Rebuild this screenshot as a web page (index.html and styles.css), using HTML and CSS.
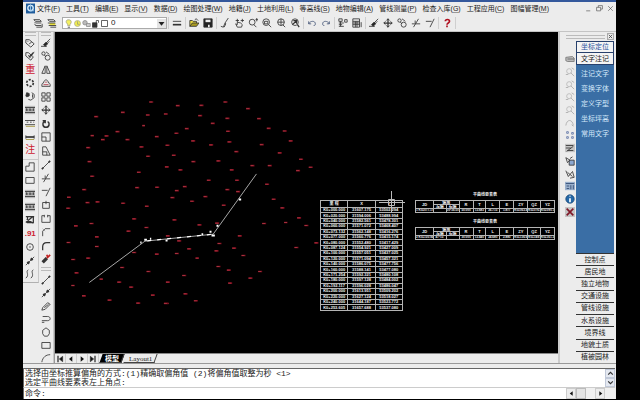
FILE: index.html
```html
<!DOCTYPE html>
<html lang="zh-CN">
<head>
<meta charset="utf-8">
<title>CAD</title>
<link rel="stylesheet" href="styles.css">
</head>
<body>
<svg class="sprite" aria-hidden="true">
  <symbol id="layers" viewBox="0 0 12 12"><path d="M1 2h7l2 2H3zM2 5l1 1h7M2 7l1 2h7M4 11h7V7"/></symbol>
  <symbol id="layers2" viewBox="0 0 12 12"><path d="M3 6h7v3H3z" fill="#e8e040" stroke="none"/><path d="M1 2h7l2 2H3zM1 6h9M2 9h9M4 11h7"/></symbol>
  <symbol id="lines" viewBox="0 0 12 12"><path d="M1 4h10" /><path d="M1 8h10" stroke-width="2"/></symbol>
  <symbol id="open" viewBox="0 0 12 12"><path d="M1 10V3h3l1 1h4v2" fill="#e8d840"/><path d="M1 10l3-4h8l-3 4z" fill="#a89a20"/><path d="M7 2c2-2 3 0 4 1"/></symbol>
  <symbol id="save" viewBox="0 0 12 12"><path d="M1 1h10v10H1z" fill="#222"/><path d="M3 2h6v3H3z" fill="#eee" stroke="none"/><path d="M6 8h2v3H6z" fill="#eee" stroke="none"/></symbol>
  <symbol id="brush" viewBox="0 0 12 12"><path d="M10 0L6 6l-2 5-3-1M6 6l1 1-2 4"/></symbol>
  <symbol id="pan" viewBox="0 0 12 12"><path d="M2 3h4M4 1v4M4 11L2 7l2 1V5l4 1 2 2-1 3zM8 3h4M10 1v4"/></symbol>
  <symbol id="zoomrt" viewBox="0 0 12 12"><circle cx="5" cy="5" r="3.5"/><path d="M7 8l3 3M9 2h3M10.500 0v4"/></symbol>
  <symbol id="zoomwin" viewBox="0 0 12 12"><circle cx="5" cy="5" r="4"/><path d="M3 4h4v3H3zM8 8l3 3"/></symbol>
  <symbol id="zoomall" viewBox="0 0 12 12"><circle cx="6" cy="5" r="4"/><path d="M6 1v8M2 5h8M8 8l3 3"/></symbol>
  <symbol id="zoomprev" viewBox="0 0 12 12"><circle cx="6" cy="5" r="4"/><path d="M3 8l5-5M4 3h4v4M9 8l2 3" stroke-width="1.500"/></symbol>
  <symbol id="undo" viewBox="0 0 12 12"><path d="M2 4v3h3M2 7c2-4 8-4 8 0 0 2-1 2-2 2" stroke="#445577"/></symbol>
  <symbol id="redo" viewBox="0 0 12 12"><path d="M10 4v3H7M10 7C8 3 2 3 2 7c0 2 1 2 2 2" stroke="#445577"/></symbol>
  <symbol id="props" viewBox="0 0 12 12"><path d="M1 1h4v3H1zM1 6h6M1 8h4M1 10h6M8 2h3v3H8zM3 4v6"/></symbol>
  <symbol id="grid" viewBox="0 0 12 12"><path d="M1 1h8v10H1zM1 4h8M1 6h8M1 8h8M4 4v7M6 4v7M11 5v6" /></symbol>
  <symbol id="erase" viewBox="0 0 12 12"><path d="M11 1L6 6M10 4L7 7"/><path d="M6 5l2 2-3 3-2-2z" fill="#222"/><path d="M0 10h7"/></symbol>
  <symbol id="move" viewBox="0 0 12 12"><path d="M6 1v10M1 6h10" stroke-width="1.500"/><path d="M4 3l2-2 2 2M4 9l2 2 2-2M3 4L1 6l2 2M9 4l2 2-2 2"/></symbol>
  <symbol id="copy" viewBox="0 0 12 12"><circle cx="3" cy="3" r="2"/><circle cx="8" cy="8" r="3"/><path d="M6 1l4 3M4 5l2 2"/></symbol>
  <symbol id="trim" viewBox="0 0 12 12"><path d="M1 7h10M9 1L3 11M5 3v3" /></symbol>
  <symbol id="extend" viewBox="0 0 12 12"><path d="M1 4h7M11 1L6 11"/></symbol>
  <symbol id="help" viewBox="0 0 12 12"><path d="M4 4c0-3 5-3 5 0 0 2-3 2-3 4M6 9v2" stroke="#b01020" stroke-width="2"/></symbol>
  <symbol id="tag" viewBox="0 0 12 12"><path d="M1 2h4l6 5-4 4-6-5zM3 4h1M5 7l3-2"/></symbol>
  <symbol id="tagcheck" viewBox="0 0 12 12"><path d="M1 2h3l6 5-3 4-6-5zM4 5l2 3 5-7" /><path d="M5 7l5-5" stroke-width="1.500"/></symbol>
  <symbol id="ring" viewBox="0 0 12 12"><circle cx="6" cy="6" r="4" stroke-width="2" stroke-dasharray="2.500 1.700"/></symbol>
  <symbol id="swirl" viewBox="0 0 12 12"><path d="M1 6l1-4 3 1v3L2 7z" fill="#333"/><path d="M4 10l3 1 4-3V4L8 2M9 4v4"/></symbol>
  <symbol id="rail" viewBox="0 0 12 12"><path d="M0 1h12v10H0z" fill="#b8b8b8" stroke="none"/><path d="M0 3h12M0 9h12M1 6h3M5 6h3M9 6h2M2 4v3M6 4v3M10 4v3"/></symbol>
  <symbol id="rail2" viewBox="0 0 12 12"><path d="M0 8h12M0 3h12M2 5h2M6 5h2M10 5h1" stroke-width="1"/><path d="M1 10h11" stroke="#a09030"/></symbol>
  <symbol id="fence" viewBox="0 0 12 12"><path d="M1 6h10" stroke-width="2"/><path d="M1 9h10" stroke="#a09030" /><path d="M1 4v4M11 4v4"/></symbol>
  <symbol id="poly" viewBox="0 0 12 12"><path d="M5 1h6v10H1V5h4z"/></symbol>
  <symbol id="rect" viewBox="0 0 12 12"><path d="M1 3h10v7H1z"/></symbol>
  <symbol id="blot" viewBox="0 0 12 12"><path d="M1 2h10M2 5l8 5M3 2v7h7V2M1 9l8-7" stroke-width="1.500"/></symbol>
  <symbol id="circle" viewBox="0 0 12 12"><circle cx="6" cy="6" r="4"/><path d="M5 6h2"/></symbol>
  <symbol id="nodes" viewBox="0 0 12 12"><path d="M1 11L11 1"/><path d="M3 9l2-2M7 5l2-2" stroke-width="3"/></symbol>
  <symbol id="waves" viewBox="0 0 12 12"><path d="M4 1C0 3 6 7 1 11M10 1C6 3 12 7 7 11"/></symbol>
  <symbol id="mirror" viewBox="0 0 12 12"><path d="M5 1v9H1zM7 1v9h4z"/></symbol>
  <symbol id="offset" viewBox="0 0 12 12"><path d="M1 10h10V8C11 6 9 6 9 6 8 1 4 1 3 6 1 6 1 8 1 10z"/><path d="M3 8h6M5 5h2" stroke="#b03040"/></symbol>
  <symbol id="array" viewBox="0 0 12 12"><path d="M1 1h4v4H1zM7 1h4v4H7zM1 7h4v4H1zM7 7h4v4H7z"/></symbol>
  <symbol id="rotate" viewBox="0 0 12 12"><path d="M4 3C1 5 2 10 6 10s5-5 2-7M2 2h3v3" stroke-width="1.800"/></symbol>
  <symbol id="scale" viewBox="0 0 12 12"><path d="M1 1h10v10H1zM1 6h5v5"/></symbol>
  <symbol id="stretch" viewBox="0 0 12 12"><path d="M2 1h4l5 10H2zM2 7h5v4"/></symbol>
  <symbol id="line" viewBox="0 0 12 12"><path d="M2 10l8-8"/><path d="M1 11l2-2M9 3l2-2" stroke-width="2"/></symbol>
  <symbol id="brk" viewBox="0 0 12 12"><path d="M2 3h8v7H2zM6 1v4" /></symbol>
  <symbol id="brk2" viewBox="0 0 12 12"><path d="M4 2H1v8h10V2H8M4 1v3M8 1v3"/></symbol>
  <symbol id="chamfer" viewBox="0 0 12 12"><path d="M2 11V5l3-3h6"/><path d="M2 2l3 3" stroke="#999"/></symbol>
  <symbol id="fillet" viewBox="0 0 12 12"><path d="M2 11V7c0-4 2-5 5-5h4" stroke-width="1.500"/></symbol>
  <symbol id="explode" viewBox="0 0 12 12"><path d="M2 10l5-5" stroke-width="4"/><path d="M7 5l4-4M7 1l1 3" stroke="#c02020" stroke-width="2"/></symbol>
  <symbol id="pencil" viewBox="0 0 12 12"><path d="M2 8l6-6 3 2-6 6-4 1zM4 8l5-4"/></symbol>
  <symbol id="arrowback" viewBox="0 0 12 12"><path d="M2 3h6c4 0 4 5 0 5H1M4 10H1"/></symbol>
  <symbol id="polygon" viewBox="0 0 12 12"><path d="M6 1l4 3v4l-2 3H4L2 8V4z"/></symbol>
  <symbol id="arc" viewBox="0 0 12 12"><path d="M1 11C2 5 6 2 11 2"/></symbol>
  <symbol id="bulb" viewBox="0 0 12 12"><path d="M6 1c5 0 4 5 2 6v2H5V7C2 5 2 1 6 1z" fill="#f4f060" stroke="#998"/><path d="M5 11h3"/></symbol>
  <symbol id="sun" viewBox="0 0 12 12"><circle cx="6" cy="6" r="4" fill="#f0ec50" stroke="#aa9"/><path d="M6 3v4h3" stroke="#997"/></symbol>
  <symbol id="freeze" viewBox="0 0 12 12"><circle cx="4" cy="5" r="3" fill="#bbb" stroke="#888"/><path d="M6 6h5v4H6z" fill="#ccc" stroke="#888"/></symbol>
  <symbol id="lock" viewBox="0 0 12 12"><path d="M2 5h6v6H2z" fill="#333"/><path d="M7 5V2h3v3"/></symbol>
  <symbol id="swatch" viewBox="0 0 12 12"><path d="M2 2h8v8H2z" fill="#fff"/></symbol>
  <symbol id="book" viewBox="0 0 12 12"><path d="M1 4l8-1 2 2v4H3L1 8z" fill="#bbb" stroke="#777"/><path d="M3 6h8" stroke="#666"/></symbol>
  <symbol id="ghost" viewBox="0 0 12 12"><circle cx="5" cy="5" r="3" stroke="#b8b8b8"/><path d="M7 7l4 4M8 1l3 2M1 9h3" stroke="#aaa"/></symbol>
  <symbol id="hook" viewBox="0 0 12 12"><path d="M1 9c1-8 8-8 9 0M8 8l2 2" stroke="#aaa"/></symbol>
  <symbol id="dots" viewBox="0 0 12 12"><path d="M2 2h2v2H2zM8 3h2v2H8zM2 8h2v2H2zM8 8h2v2H8z" stroke="#6478a8"/></symbol>
  <symbol id="sheet" viewBox="0 0 12 12"><path d="M0 1h12v10H0z" fill="#c4c4c4" stroke="none"/><path d="M1 3h9M1 6h6M2 10l8-6M3 9h7"/></symbol>
  <symbol id="sheet2" viewBox="0 0 12 12"><path d="M5 5h6v6H5z" fill="#8ca8d0"/><path d="M1 2l5 3-3 3zM6 3l3-2"/></symbol>
  <symbol id="clip" viewBox="0 0 12 12"><path d="M1 2l3 7 5-6 2 7-5 1M3 4l6 5"/></symbol>
  <symbol id="cal" viewBox="0 0 12 12"><path d="M0 1h12v10H0z" fill="#9ab0cc" stroke="none"/><path d="M1 3h10M2 6h3M2 9h3M7 5v5M10 5v5" stroke="#304870"/></symbol>
  <symbol id="info" viewBox="0 0 12 12"><circle cx="6" cy="6" r="5" fill="#2468a8" stroke="#184878"/><path d="M6 2v1M6 5v5" stroke="#fff" stroke-width="2"/></symbol>
  <symbol id="cross" viewBox="0 0 12 12"><path d="M0 0h12v12H0z" fill="#c4c4c4" stroke="none"/><path d="M2 2l8 8M10 2l-8 8" stroke="#801828" stroke-width="2"/></symbol>
  <symbol id="up" viewBox="0 0 12 12"><path d="M2 8l4-4 4 4" stroke-width="2"/></symbol>
  <symbol id="down" viewBox="0 0 12 12"><path d="M2 4l4 4 4-4" stroke-width="2"/></symbol>
  <symbol id="tri" viewBox="0 0 12 12"><path d="M2 4h8L6 9z" fill="#222" stroke="none"/></symbol>
  <symbol id="left" viewBox="0 0 12 12"><path d="M8 2v8L3 6z" fill="#111" stroke="none"/></symbol>
  <symbol id="right" viewBox="0 0 12 12"><path d="M4 2v8l5-4z" fill="#111" stroke="none"/></symbol>
  <symbol id="first" viewBox="0 0 12 12"><path d="M10 2v8L5 6z" fill="#111"/><path d="M3 1v10" stroke-width="2"/></symbol>
  <symbol id="last" viewBox="0 0 12 12"><path d="M2 2v8l5-4z" fill="#111"/><path d="M9 1v10" stroke-width="2"/></symbol>
</svg>

<div class="window">
  <div class="titlebar"></div>
  <nav class="menubar">
    <svg class="logo" viewBox="0 0 10 11"><path d="M0 0h10v11H0z" fill="#1f5c9c"/><circle cx="5" cy="5" r="3" fill="none" stroke="#d8ecfa" stroke-width="1.500"/><path d="M5 1v7h4" fill="none" stroke="#9cc8ec"/></svg>
    <button>文件(<u>F</u>)</button><button>工具(<u>T</u>)</button><button>编辑(<u>E</u>)</button><button>显示(<u>V</u>)</button><button>数据(<u>D</u>)</button><button>绘图处理(<u>W</u>)</button><button>地籍(<u>J</u>)</button><button>土地利用(<u>L</u>)</button><button>等高线(<u>S</u>)</button><button>地物编辑(<u>A</u>)</button><button>管线测量(<u>P</u>)</button><button>检查入库(<u>G</u>)</button><button>工程应用(<u>C</u>)</button><button>图幅管理(<u>M</u>)</button>
    <div class="winctl">
      <button aria-label="最小化"><svg class="mini" viewBox="0 0 12 12"><path d="M2 10h7"/></svg></button>
      <button aria-label="还原"><svg class="mini" viewBox="0 0 12 12"><path d="M4 4V1h7v6H8M1 4h7v6H1z"/></svg></button>
      <button aria-label="关闭"><svg class="mini" viewBox="0 0 12 12"><path d="M2 2l8 8M10 2l-8 8"/></svg></button>
    </div>
  </nav>

  <div class="toolbar">
    <button aria-label="图层"><svg><use href="#layers"/></svg></button>
    <button aria-label="图层特性"><svg><use href="#layers2"/></svg></button>
    <label class="layer">
      <svg><use href="#bulb"/></svg><svg><use href="#sun"/></svg><svg><use href="#freeze"/></svg><svg><use href="#lock"/></svg><svg><use href="#swatch"/></svg>
      <select aria-label="当前图层"><option>0</option></select>
      <span class="drop"><svg><use href="#tri"/></svg></span>
    </label>
    <i></i>
    <button aria-label="线宽"><svg><use href="#lines"/></svg></button>
    <i></i>
    <button aria-label="打开"><svg><use href="#open"/></svg></button>
    <button aria-label="保存"><svg><use href="#save"/></svg></button>
    <i></i>
    <button aria-label="特性匹配"><svg><use href="#brush"/></svg></button>
    <button aria-label="平移"><svg><use href="#pan"/></svg></button>
    <button aria-label="实时缩放"><svg><use href="#zoomrt"/></svg></button>
    <button aria-label="窗口缩放"><svg><use href="#zoomwin"/></svg></button>
    <button aria-label="全部缩放"><svg><use href="#zoomall"/></svg></button>
    <button aria-label="上一视图"><svg><use href="#zoomprev"/></svg></button>
    <i></i>
    <button aria-label="撤销"><svg><use href="#undo"/></svg></button>
    <button aria-label="重做"><svg><use href="#redo"/></svg></button>
    <i></i>
    <button aria-label="特性"><svg><use href="#props"/></svg></button>
    <button aria-label="设计中心"><svg><use href="#grid"/></svg></button>
    <i></i>
    <button aria-label="删除"><svg><use href="#erase"/></svg></button>
    <button aria-label="移动"><svg><use href="#move"/></svg></button>
    <button aria-label="复制"><svg><use href="#copy"/></svg></button>
    <button aria-label="修剪"><svg><use href="#trim"/></svg></button>
    <button aria-label="延伸"><svg><use href="#extend"/></svg></button>
    <i></i>
    <button aria-label="帮助"><svg><use href="#help"/></svg></button>
    <i></i>
  </div>

  <div class="work">
    <div class="dock">
      <div class="strip strip-a">
        <div class="grip"></div>
        <div class="tools nine">
          <button aria-label="标签"><svg><use href="#tag"/></svg></button>
          <button aria-label="检查标签"><svg><use href="#tagcheck"/></svg></button>
          <button class="glyph">重</button>
          <button aria-label="环形"><svg><use href="#ring"/></svg></button>
          <button aria-label="换向"><svg><use href="#swirl"/></svg></button>
          <button aria-label="铁路"><svg><use href="#rail"/></svg></button>
          <button aria-label="坎线"><svg><use href="#rail2"/></svg></button>
          <button aria-label="栅栏"><svg><use href="#fence"/></svg></button>
          <button class="glyph">注</button>
        </div>
        <div class="split"></div>
        <div class="tools nine">
          <button aria-label="多点房"><svg><use href="#poly"/></svg></button>
          <button aria-label="四点房"><svg><use href="#rect"/></svg></button>
          <button aria-label="围墙"><svg><use href="#rail"/></svg></button>
          <button aria-label="陡坎"><svg><use href="#rail"/></svg></button>
          <button aria-label="符号"><svg><use href="#blot"/></svg></button>
          <button class="glyph small">.91</button>
          <button aria-label="圆"><svg><use href="#circle"/></svg></button>
          <button aria-label="节点"><svg><use href="#nodes"/></svg></button>
          <button aria-label="等高线"><svg><use href="#waves"/></svg></button>
        </div>
      </div>
      <div class="strip strip-b">
        <div class="grip"></div>
        <div class="tools seventeen">
          <button aria-label="删除"><svg><use href="#erase"/></svg></button>
          <button aria-label="复制"><svg><use href="#copy"/></svg></button>
          <button aria-label="镜像"><svg><use href="#mirror"/></svg></button>
          <button aria-label="偏移"><svg><use href="#offset"/></svg></button>
          <button aria-label="阵列"><svg><use href="#array"/></svg></button>
          <button aria-label="移动"><svg><use href="#move"/></svg></button>
          <button aria-label="旋转"><svg><use href="#rotate"/></svg></button>
          <button aria-label="缩放"><svg><use href="#scale"/></svg></button>
          <button aria-label="拉伸"><svg><use href="#stretch"/></svg></button>
          <button aria-label="拉长"><svg><use href="#line"/></svg></button>
          <button aria-label="修剪"><svg><use href="#trim"/></svg></button>
          <button aria-label="延伸"><svg><use href="#extend"/></svg></button>
          <button aria-label="打断于点"><svg><use href="#brk"/></svg></button>
          <button aria-label="打断"><svg><use href="#brk2"/></svg></button>
          <button aria-label="倒角"><svg><use href="#chamfer"/></svg></button>
          <button aria-label="圆角"><svg><use href="#fillet"/></svg></button>
          <button aria-label="分解"><svg><use href="#explode"/></svg></button>
        </div>
        <div class="grip mid"></div>
        <div class="tools seven">
          <button aria-label="直线"><svg><use href="#line"/></svg></button>
          <button aria-label="构造线"><svg><use href="#nodes"/></svg></button>
          <button aria-label="多段线"><svg><use href="#pencil"/></svg></button>
          <button aria-label="返回"><svg><use href="#arrowback"/></svg></button>
          <button aria-label="多边形"><svg><use href="#polygon"/></svg></button>
          <button aria-label="矩形"><svg><use href="#rect"/></svg></button>
          <button aria-label="圆弧"><svg><use href="#arc"/></svg></button>
        </div>
      </div>
    </div>

    <main class="view">
      <div class="canvas">
        <svg class="drawing" viewBox="0 0 503 321" preserveAspectRatio="xMinYMin meet">
          <defs>
            <path id="pts" d="M268 36h12M103 80h12M183 67h12M258 75h12M312 72h12M348 47h12M419 46h12M491 36h12M559 56h12M415 77h12M497 85h12M592 86h12M621 115h12M669 123h12M247 107h8M453 100h12M375 116h12M167 125h12M92 137h10M134 138h12M123 149h12M197 149h12M285 140h12M344 130h12M394 153h12M499 124h12M317 166h12M448 165h12M503 156h12M600 164h12M687 153h12M239 171h12M79 173h12M654 189h12M336 196h12M524 185h12M259 199h12M83 215h12M395 215h12M470 213h12M718 208h12M747 232h12M709 242h12M572 227h12M624 227h12M315 231h12M356 240h12M510 240h12M231 247h12M91 259h12M441 271h12M526 271h12M616 283h12M67 299h12M226 293h12M286 292h12M369 290h12M345 302h12M497 299h12M529 305h12M21 322h12M332 323h12M431 320h12M636 328h12M77 338h12M107 336h12M184 340h12M391 334h12M255 349h12M486 346h12M19 355h12M662 354h12M712 384h12M217 387h12M338 390h12M673 398h10M607 401h12M734 407h12M89 401h12M42 408h12M413 405h12M466 400h12M254 413h12M200 424h12M105 441h12M318 438h12M534 438h12M20 458h12M352 453h12M473 461h12M764 459h12M704 473h12M105 470h12M382 477h12M517 475h12M464 483h12M217 488h12M285 493h12M345 491h12M545 497h12M79 505h12M34 509h12M407 505h10M181 533h12M470 530h12M501 541h12M44 549h12M260 545h12M595 545h12M367 557h12M119 568h10M566 565h12M172 577h12M318 577h12M505 580h12M34 587h10M208 592h12M66 618h12M273 616h12M371 612h12M143 631h12M402 633h12M229 640h12M312 641h14"/>
          </defs>
          <g transform="translate(5 58) scale(.333)" fill="none">
            <use href="#pts" stroke="#7a0c1c" stroke-width="5"/>
            <use href="#pts" stroke="#c04450" stroke-width="2" stroke-dasharray="9 3"/>
            <path d="M88 578L255 454 460 433 590 252" stroke="#c8c8c8" stroke-width="2.500"/>
            <path d="M241 458h4M253 450h8M270 447h4M317 452h6M425 433h5M449 426h6M455 437h10M470 408h6M537 329h7" stroke="#fff" stroke-width="6"/>
            <path d="M262 453L460 433" stroke="#fff" stroke-width="4" stroke-dasharray="12 18"/>
          </g>
        </svg>

        <table class="coords">
          <thead><tr><th>里 程</th><th>X</th><th>Y</th></tr></thead>
          <tbody>
            <tr><td>K0+000.000</td><td>31607.175</td><td>53502.294</td></tr>
            <tr><td>K0+020.000</td><td>31594.006</td><td>53488.994</td></tr>
            <tr><td>K0+040.000</td><td>31582.561</td><td>53478.301</td></tr>
            <tr><td>K0+060.000</td><td>31571.072</td><td>53468.407</td></tr>
            <tr><td>K0+073.132</td><td>31562.148</td><td>53416.276</td></tr>
            <tr><td>K0+077.000</td><td>31560.776</td><td>53415.174</td></tr>
            <tr><td>K0+080.000</td><td>31552.480</td><td>53417.429</td></tr>
            <tr><td>K0+087.124</td><td>31554.921</td><td>53427.009</td></tr>
            <tr><td>K0+100.000</td><td>31557.051</td><td>53437.025</td></tr>
            <tr><td>K0+120.000</td><td>31571.094</td><td>53457.321</td></tr>
            <tr><td>K0+140.000</td><td>31586.075</td><td>53477.756</td></tr>
            <tr><td>K0+160.000</td><td>31588.141</td><td>53477.080</td></tr>
            <tr><td>K0+171.254</td><td>31592.321</td><td>53480.108</td></tr>
            <tr><td>K0+180.000</td><td>31597.128</td><td>53484.002</td></tr>
            <tr><td>K0+192.117</td><td>31596.028</td><td>53486.047</td></tr>
            <tr><td>K0+200.000</td><td>31613.951</td><td>53509.202</td></tr>
            <tr><td>K0+220.000</td><td>31627.124</td><td>53518.027</td></tr>
            <tr><td>K0+240.000</td><td>31644.187</td><td>53523.772</td></tr>
            <tr><td>K0+253.605</td><td>31657.688</td><td>53537.080</td></tr>
          </tbody>
        </table>

        <table class="curve curve-1">
          <caption>平曲线要素表</caption>
          <colgroup><col class="w18"><col><col><col class="w14"><col><col class="w14"><col class="w14"><col class="w14"><col><col class="w14"></colgroup>
          <tr class="head"><th rowspan="2">JD</th><th colspan="2" class="angle">偏角</th><th rowspan="2">R</th><th rowspan="2">T</th><th rowspan="2">L</th><th rowspan="2">E</th><th rowspan="2">ZY</th><th rowspan="2">QZ</th><th rowspan="2">YZ</th></tr>
          <tr class="sub"><th>左偏</th><th>右偏</th></tr>
          <tr class="data"><td>1 K0+077.175</td><td></td><td>30°36′50″</td><td>50.000</td><td>13.683</td><td>26.715</td><td>1.877</td><td>K0+063.4</td><td>K0+076.8</td><td>K0+090.1</td></tr>
        </table>

        <table class="curve curve-2">
          <caption>平曲线要素表</caption>
          <colgroup><col class="w18"><col><col><col class="w14"><col><col class="w14"><col class="w14"><col class="w14"><col><col class="w14"></colgroup>
          <tr class="head"><th rowspan="2">JD</th><th colspan="2" class="angle">偏角</th><th rowspan="2">R</th><th rowspan="2">T</th><th rowspan="2">L</th><th rowspan="2">E</th><th rowspan="2">ZY</th><th rowspan="2">QZ</th><th rowspan="2">YZ</th></tr>
          <tr class="sub"><th>左偏</th><th>右偏</th></tr>
          <tr class="data"><td>2 K0+150.060</td><td>47°15′</td><td></td><td>30.000</td><td>13.440</td><td>24.680</td><td>2.880</td><td>K0+136.6</td><td>K0+149.0</td><td>K0+161.3</td></tr>
        </table>

        <svg class="cursor" viewBox="0 0 26 22"><path d="M12.500 0v22M0 11.500h26M9.500 8.500h6v6h-6z" fill="none" stroke="#bbb"/></svg>
      </div>

      <div class="tabs">
        <button class="nav" aria-label="第一个"><svg><use href="#first"/></svg></button>
        <button class="nav" aria-label="上一个"><svg><use href="#left"/></svg></button>
        <button class="nav" aria-label="下一个"><svg><use href="#right"/></svg></button>
        <button class="nav" aria-label="最后"><svg><use href="#last"/></svg></button>
        <button class="tab active">模型</button>
        <button class="tab">Layout1</button>
      </div>
    </main>

    <aside class="side">
      <div class="side-top"><div class="grip"></div><button class="close" aria-label="关闭"><svg class="mini" viewBox="0 0 12 12"><path d="M2 2l8 8M10 2l-8 8" stroke-width="2"/></svg></button></div>
      <div class="side-body">
        <div class="tools thirteen">
          <button aria-label="图集"><svg><use href="#book"/></svg></button>
          <button aria-label="缩放"><svg><use href="#ghost"/></svg></button>
          <button aria-label="平移"><svg><use href="#ghost"/></svg></button>
          <button aria-label="放大"><svg><use href="#ghost"/></svg></button>
          <button aria-label="缩小"><svg><use href="#ghost"/></svg></button>
          <button aria-label="回转"><svg><use href="#hook"/></svg></button>
          <button aria-label="点号"><svg><use href="#dots"/></svg></button>
          <button aria-label="图纸"><svg><use href="#sheet"/></svg></button>
          <button aria-label="编辑图纸"><svg><use href="#sheet2"/></svg></button>
          <button aria-label="裁剪"><svg><use href="#clip"/></svg></button>
          <button aria-label="表格"><svg><use href="#cal"/></svg></button>
          <button aria-label="信息"><svg><use href="#info"/></svg></button>
          <button aria-label="取消"><svg><use href="#cross"/></svg></button>
        </div>
        <div class="panel">
          <button class="mode">坐标定位</button>
          <button class="mode open">文字注记</button>
          <div class="choices"><button>注记文字</button><button>变换字体</button><button>定义字型</button><button>坐标坪高</button><button>常用文字</button></div>
          <div class="groups"><button>控制点</button><button>居民地</button><button>独立地物</button><button>交通设施</button><button>管线设施</button><button>水系设施</button><button>境界线</button><button>地貌土质</button><button>植被园林</button></div>
        </div>
      </div>
    </aside>
  </div>

  <section class="command">
    <div class="history">
      <div class="log"><p>选择由坐标推算偏角的方式:(1)精确取偏角值 (2)将偏角值取整为秒 &lt;1&gt;</p><p>选定平曲线要素表左上角点:</p></div>
      <div class="vscroll"><button aria-label="向上"><svg><use href="#up"/></svg></button><button aria-label="向下"><svg><use href="#down"/></svg></button></div>
    </div>
    <div class="prompt">
      <label for="cmd">命令:</label><input id="cmd" type="text">
      <div class="hscroll"><button aria-label="向左"><svg><use href="#left"/></svg></button><span class="thumb"></span><button aria-label="向右"><svg><use href="#right"/></svg></button></div>
    </div>
  </section>
</div>
</body>
</html>
```
FILE: styles.css
```css
* { box-sizing: border-box; }

body {
  margin: 0;
  background: #000;
  color: #222;
  font: 7px/10px "Liberation Sans", "Noto Sans CJK SC", sans-serif;
}

button, input, select {
  margin: 0;
  padding: 0;
  border: 0;
  background: none;
  color: inherit;
  font: inherit;
}

.sprite { position: absolute; width: 0; height: 0; }

svg {
  display: block;
  width: 10px;
  height: 10px;
  fill: none;
  stroke: #333;
}

.window {
  display: flex;
  flex-direction: column;
  height: 100vh;
  padding: 0 24px 1px 23px;
}

.titlebar { height: 2px; background: #34589c; }

.menubar {
  display: flex;
  align-items: center;
  gap: 6px;
  height: 13px;
  padding: 0 2px 0 3px;
  background: #ececec;
  white-space: nowrap;
}
.menubar u { text-decoration-color: #999; }
.menubar .logo { width: 9px; height: 11px; margin-right: -4px; stroke: none; }

.winctl { display: flex; gap: 4px; margin-left: auto; }
svg.mini { width: 7px; height: 7px; stroke: #444; }

.toolbar {
  display: flex;
  align-items: center;
  height: 17px;
  padding-left: 8px;
  background: #ececec;
  border-bottom: 1px solid #c4c4c4;
}
.toolbar button { display: grid; place-items: center; width: 14px; height: 14px; }
.toolbar i { width: 1px; height: 12px; margin: 0 1px; background: #cfcfcf; }

.layer {
  display: flex;
  align-items: center;
  width: 105px;
  height: 12px;
  margin-left: 3px;
  padding-left: 1px;
  background: #fff;
  border: 1px solid #aaa;
}
.layer svg { width: 9px; height: 9px; }
.layer select { flex: 1; appearance: none; padding-left: 2px; font-size: 8px; }
.drop { background: #e4e4e4; }

.work { flex: 1; display: flex; min-height: 0; background: #ececec; }

.dock { display: flex; width: 32px; overflow: hidden; border-right: 1px solid #999; }
.strip { width: 16px; border-right: 1px solid #c8c8c8; }
.strip-a { align-self: flex-start; height: 251px; border-bottom: 1px solid #b0b0b0; }
.grip {
  height: 4px;
  margin: 0 2px;
  border-top: 1px solid #bbb;
  border-bottom: 1px solid #bbb;
}
.strip-b .mid { margin-top: 1px; margin-bottom: 2px; }

.tools { display: grid; grid-auto-rows: 1fr; }
.tools button { display: grid; place-items: center; }
.nine { height: 121px; }
.seventeen { height: 230px; }
.seven { height: 92px; }
.thirteen { height: 165px; }
.split { height: 3px; border-bottom: 1px solid #c8c8c8; }
.tools .glyph { color: #cc2030; font-size: 10px; line-height: 12px; }
.tools .small { font-size: 8px; font-weight: bold; }

.view { flex: 1; display: flex; flex-direction: column; min-width: 0; }

.canvas {
  position: relative;
  flex: 1;
  overflow: hidden;
  background: #000;
}
.drawing { position: absolute; top: 0; left: 0; width: 503px; height: 321px; }

.canvas table {
  position: absolute;
  border-collapse: collapse;
  table-layout: fixed;
  color: #f4f4f4;
  text-align: center;
  white-space: nowrap;
}
.canvas th, .canvas td { padding: 0; border: 1px solid #b4b4b4; overflow: hidden; }

.coords {
  top: 168px;
  left: 265px;
  width: 83px;
  height: 111px;
  font-size: 4px;
  line-height: 4px;
  font-weight: bold;
}
.coords th { height: 7px; }

.curve { left: 360px; width: 140px; font-size: 4px; line-height: 3px; }
.curve caption {
  height: 8px;
  color: #eee;
  font-size: 4px;
  line-height: 6px;
  font-weight: bold;
}
.curve-1 { top: 160px; }
.curve-2 { top: 187px; }
.curve .w18 { width: 18px; }
.curve .w14 { width: 14px; }
.curve .head, .curve .sub { height: 4px; }
.curve .data { height: 4px; font-size: 3px; font-weight: bold; }

.cursor { position: absolute; top: 159px; left: 324px; width: 26px; height: 22px; }

.tabs {
  display: flex;
  align-items: center;
  height: 10px;
  background: #ececec;
  border-top: 1px solid #888;
}
.nav { display: grid; place-items: center; width: 11px; height: 9px; border-right: 1px solid #ccc; }
.nav svg { width: 8px; height: 8px; }
.tab {
  position: relative;
  z-index: 0;
  height: 9px;
  padding: 0 5px;
  font: 7px/8px "Liberation Serif", "Noto Sans CJK SC", serif;
}
.tab::before {
  content: "";
  position: absolute;
  inset: 0 1px;
  z-index: -1;
  border-right: 1px solid #444;
  border-bottom: 1px solid #444;
  transform: skewX(-20deg);
}
.tab.active { margin-left: 1px; color: #fff; font-weight: bold; }
.tab.active::before { background: #000; }

.side {
  display: flex;
  flex-direction: column;
  width: 58px;
  padding: 0 2px 0 4px;
  border-left: 2px solid #ccc;
}
.side-top { display: flex; align-items: center; height: 9px; }
.side-top .grip { flex: 1; }
.close { border: 1px solid #aaa; }
.side-top svg { width: 5px; height: 5px; }

.side-body { flex: 1; display: flex; min-height: 0; }
.thirteen { width: 12px; margin-top: 12px; }
.panel {
  flex: 1;
  display: flex;
  flex-direction: column;
  background: #3a6ea5;
}
.mode { height: 12px; background: #f4f4f4; border: 1px solid #27406c; color: #24509c; }
.mode.open { color: #222; border-top: 0; }
.choices {
  flex: 1;
  display: flex;
  flex-direction: column;
  align-items: center;
  gap: 5px;
  padding-top: 4px;
  color: #d4e8fa;
}
.groups { display: grid; grid-auto-rows: 1fr; height: 110px; }
.groups button { background: #ececec; border: 0 solid #333; border-top-width: 1px; line-height: 8px; }

.command {
  background: #ececec;
  border-top: 1px solid #999;
  padding: 4px 1px 0 0;
  font: 8px/9px "Liberation Mono", "Noto Sans CJK SC", monospace;
}
.history { display: flex; background: #fff; border: 1px solid #666; border-width: 1px 0 0 1px; }
.log { flex: 1; padding-left: 1px; }
.log p { margin: 0; }
.vscroll { display: grid; width: 10px; background: #e4e8f0; }
.vscroll button { display: grid; place-items: center; border: 1px solid #c0c8d8; }
.vscroll svg, .hscroll svg { width: 7px; height: 7px; }
.prompt {
  display: flex;
  align-items: center;
  height: 12px;
  background: #fff;
  border-top: 1px solid #ccc;
  border-left: 1px solid #666;
}
.prompt label { padding-left: 1px; }
.prompt input { flex: 1; min-width: 0; }
.hscroll { display: flex; width: 49px; height: 11px; padding-right: 10px; background: #f0f0f0; }
.hscroll button { display: grid; place-items: center; width: 10px; border: 1px solid #ccc; background: #ececec; }
.hscroll button:last-child { margin-left: auto; }
.thumb { width: 10px; background: #e4e4e4; border: 1px solid #bbb; }
```
